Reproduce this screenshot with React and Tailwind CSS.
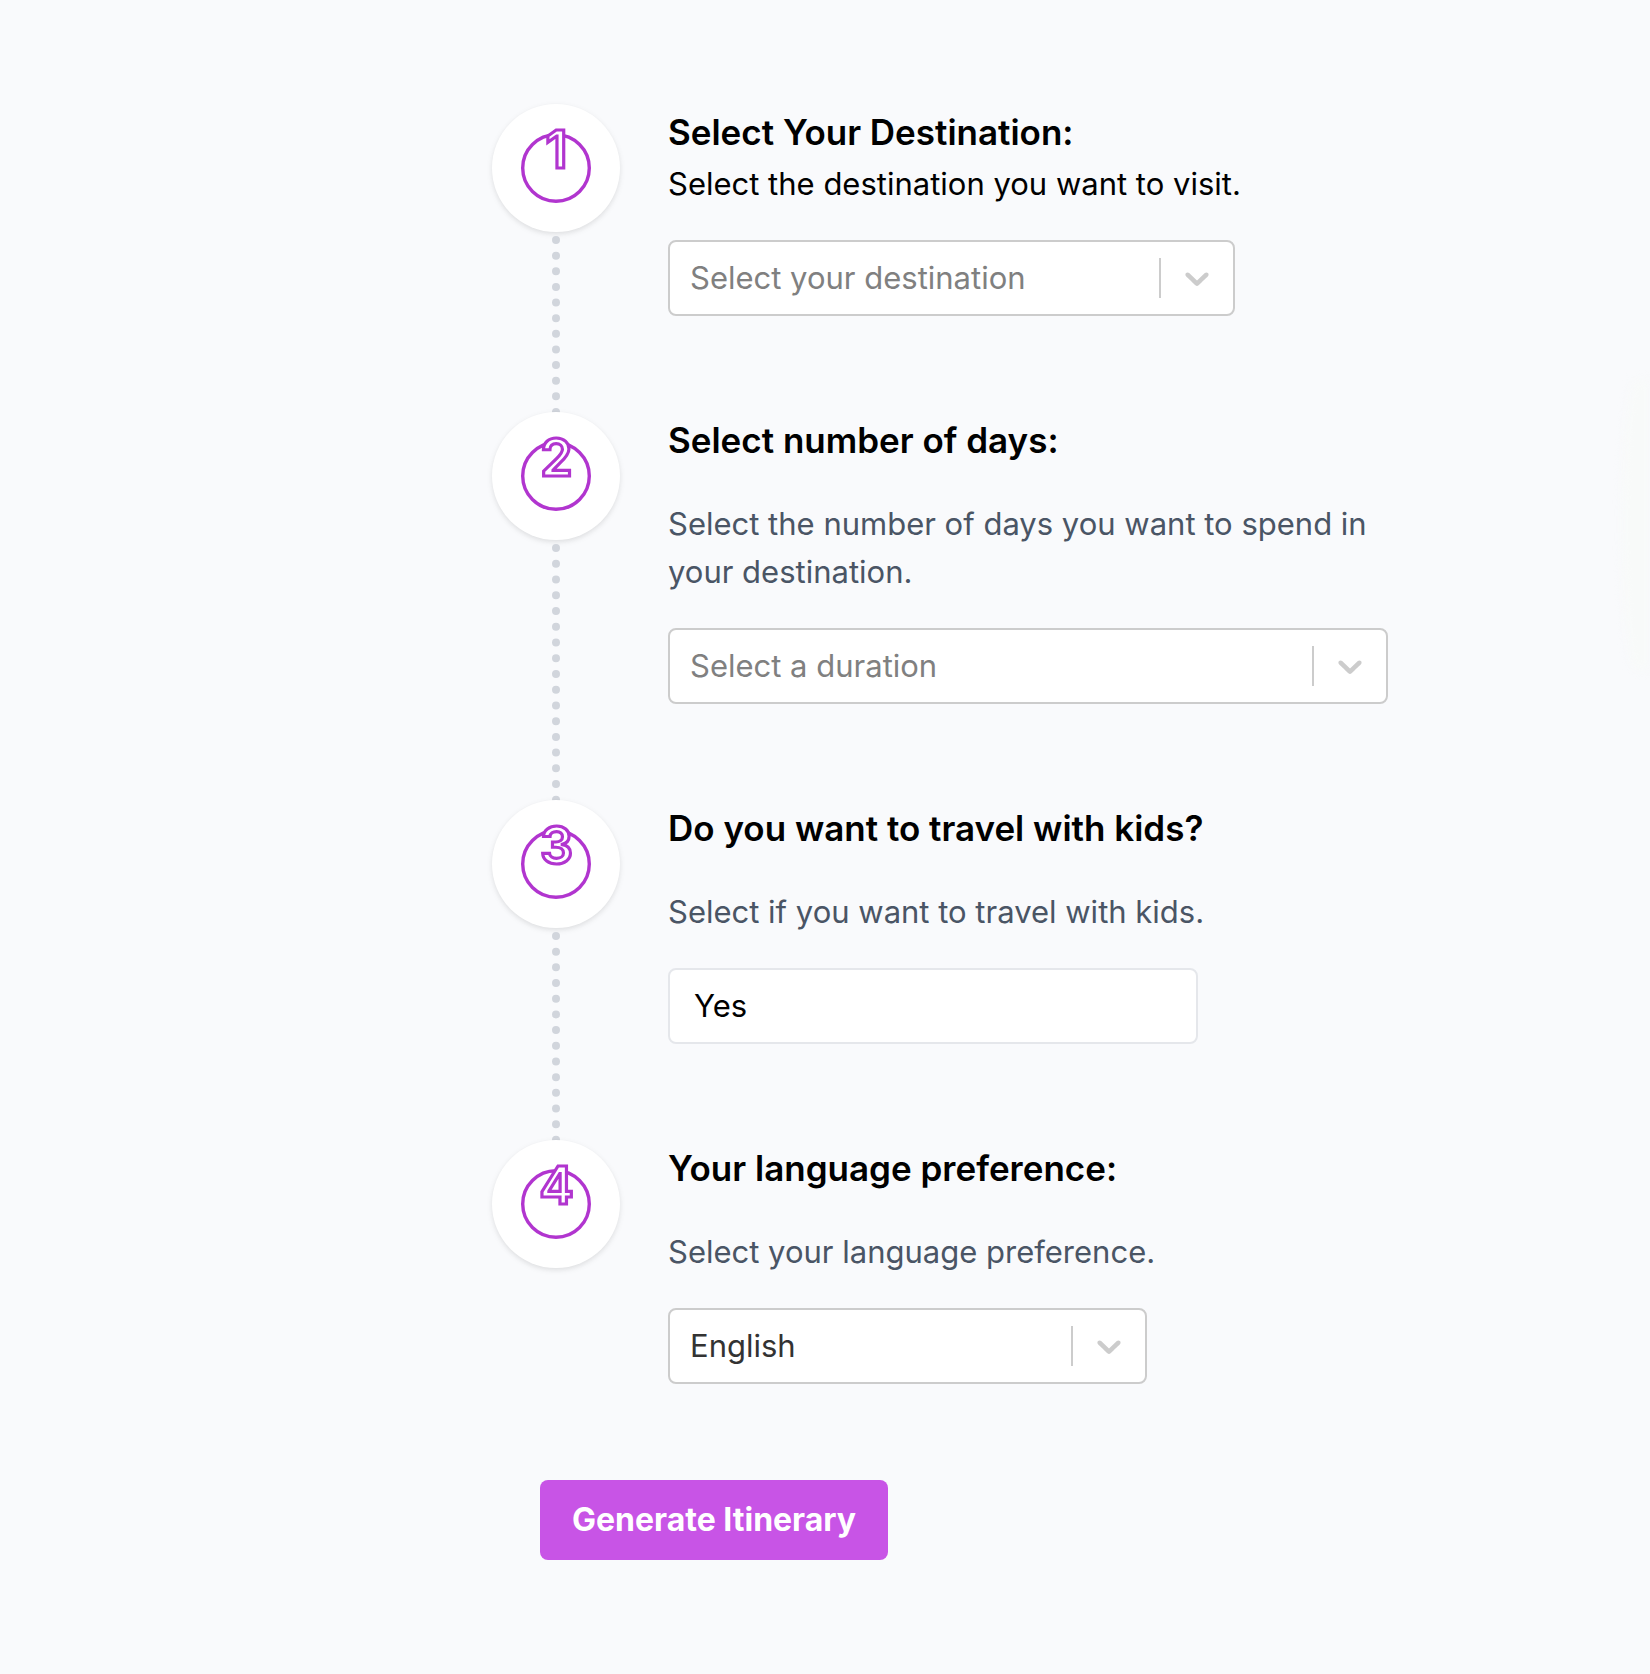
import React, { useState } from 'react';

const destinations = ['Paris', 'Rome', 'Tokyo', 'New York'];
const durations = ['1 day', '3 days', '5 days', '7 days'];
const languages = ['English', 'Spanish', 'French', 'German'];

function StepNumber({ number }) {
  return (
    <div className="h-32 w-32 shrink-0 rounded-full bg-white shadow-[0_2px_6px_rgba(0,0,0,0.08),0_2px_4px_rgba(0,0,0,0.04)]">
      <svg viewBox="0 0 128 128" className="h-32 w-32" aria-hidden="true">
        <circle cx="64" cy="64" r="33.3" fill="#fff" stroke="#b135cf" strokeWidth="3.4" />
        <text
          x="64.5"
          y="64"
          textAnchor="middle"
          fontSize="52"
          fontWeight="600"
          fill="#fff"
          stroke="#b135cf"
          strokeWidth="3.2"
        >
          {number}
        </text>
      </svg>
    </div>
  );
}

function Step({ number, last, children }) {
  return (
    <li className="flex gap-12">
      <div className="flex shrink-0 flex-col items-center">
        <StepNumber number={number} />
        {!last && <div className="mt-1 -mb-1 flex-1 border-l-8 border-dotted border-gray-300" />}
      </div>
      <div className={last ? 'min-w-0' : 'min-w-0 pb-24'}>{children}</div>
    </li>
  );
}

function SelectBox({ id, value, onChange, options, placeholder, className }) {
  return (
    <div className={`relative mt-8 max-w-full ${className}`}>
      <select
        id={id}
        value={value}
        onChange={(e) => onChange(e.target.value)}
        className={
          value
            ? 'block h-[76px] w-full appearance-none rounded-lg border-2 border-[#ccc] bg-white pr-20 pl-5 text-[#333]'
            : 'block h-[76px] w-full appearance-none rounded-lg border-2 border-[#ccc] bg-white pr-20 pl-5 text-[#808080]'
        }
      >
        {placeholder && <option value="">{placeholder}</option>}
        {options.map((option) => (
          <option key={option} value={option}>{option}</option>
        ))}
      </select>
      <div className="pointer-events-none absolute inset-y-0 right-0.5 flex items-center">
        <span className="h-10 w-0.5 bg-[#ccc]" />
        <svg viewBox="0 0 20 20" className="mx-4 h-10 w-10 fill-[#ccc]" aria-hidden="true">
          <path d="M4.516 7.548c0.436-0.446 1.043-0.481 1.576 0l3.908 3.747 3.908-3.747c0.533-0.481 1.141-0.446 1.574 0 0.436 0.445 0.408 1.197 0 1.615-0.406 0.418-4.695 4.502-4.695 4.502-0.217 0.223-0.502 0.335-0.787 0.335s-0.57-0.112-0.789-0.335c0 0-4.287-4.084-4.695-4.502s-0.436-1.17 0-1.615z" />
        </svg>
      </div>
    </div>
  );
}

function App() {
  const [destination, setDestination] = useState('');
  const [duration, setDuration] = useState('');
  const [kids, setKids] = useState('Yes');
  const [language, setLanguage] = useState('English');

  const handleSubmit = (e) => {
    e.preventDefault();
  };

  return (
    <main className="relative flex min-h-screen justify-center overflow-hidden bg-[#f9fafc] pt-[104px] pb-[114px] pl-[230px] font-['Inter',sans-serif] text-[31px] leading-[48px] text-black">
      {/* Soft glow on the right edge */}
      <div className="absolute top-[380px] right-0 h-[290px] w-7 rounded-l-[100%] bg-[#f8faf9] blur-xs" />

      <form onSubmit={handleSubmit} className="w-[896px] max-w-full">
        <ol>
          <Step number={1}>
            <h2 className="text-[35px] leading-[56px] font-semibold">
              <label htmlFor="destination">Select Your Destination:</label>
            </h2>
            <p>Select the destination you want to visit.</p>
            <SelectBox
              id="destination"
              value={destination}
              onChange={setDestination}
              options={destinations}
              placeholder="Select your destination"
              className="w-[567px]"
            />
          </Step>

          <Step number={2}>
            <h2 className="text-[35px] leading-[56px] font-semibold">
              <label htmlFor="duration">Select number of days:</label>
            </h2>
            <p className="mt-8 text-gray-600">
              Select the number of days you want to spend in your destination.
            </p>
            <SelectBox
              id="duration"
              value={duration}
              onChange={setDuration}
              options={durations}
              placeholder="Select a duration"
              className="w-full"
            />
          </Step>

          <Step number={3}>
            <h2 className="text-[35px] leading-[56px] font-semibold">
              <label htmlFor="kids">Do you want to travel with kids?</label>
            </h2>
            <p className="mt-8 text-gray-600">Select if you want to travel with kids.</p>
            <select
              id="kids"
              value={kids}
              onChange={(e) => setKids(e.target.value)}
              className="mt-8 block h-[76px] w-[530px] max-w-full appearance-none rounded-lg border-2 border-gray-200 bg-white px-6"
            >
              <option value="Yes">Yes</option>
              <option value="No">No</option>
            </select>
          </Step>

          <Step number={4} last>
            <h2 className="text-[35px] leading-[56px] font-semibold">
              <label htmlFor="language">Your language preference:</label>
            </h2>
            <p className="mt-8 text-gray-600">Select your language preference.</p>
            <SelectBox
              id="language"
              value={language}
              onChange={setLanguage}
              options={languages}
              className="w-[479px]"
            />
          </Step>
        </ol>

        <button
          type="submit"
          className="mt-24 ml-12 rounded-lg bg-[#c854e6] px-8 py-4 text-[32px] leading-[48px] font-bold text-white"
        >
          Generate Itinerary
        </button>
      </form>
    </main>
  );
}

export default App;
